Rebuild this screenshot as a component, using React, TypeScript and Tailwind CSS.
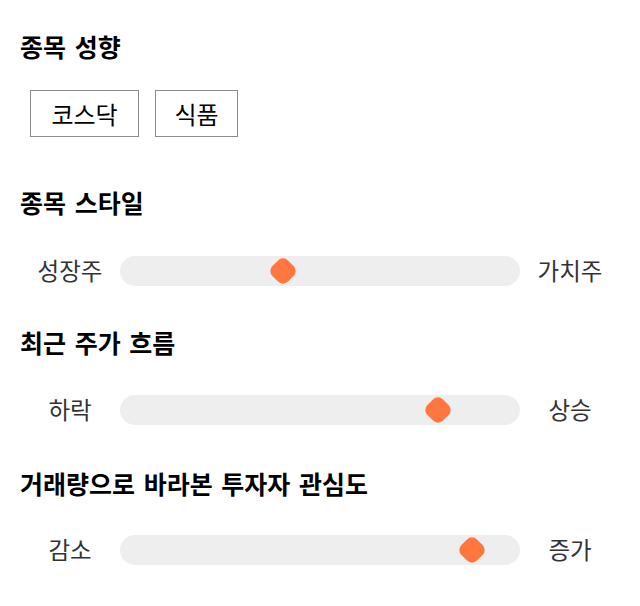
const font = { fontFamily: '"Noto Sans CJK KR", "Noto Sans", sans-serif' };

type SliderProps = {
  left: string;
  right: string;
  value: number;
};

function Slider({ left, right, value }: SliderProps) {
  return (
    <div className="flex items-center h-[30px]">
      <span className="w-[100px] shrink-0 text-center text-[23.5px] text-[#333]">{left}</span>
      <div className="relative w-[400px] h-[30px] rounded-full bg-[#eeeeee]">
        <div
          className="absolute top-[4px] w-[22px] h-[22px] rotate-45 rounded-[7px] bg-[#ff763f]"
          style={{ left: `${4 + value * 3.7}px` }}
        />
      </div>
      <span className="w-[100px] shrink-0 text-center text-[23.5px] text-[#333]">{right}</span>
    </div>
  );
}

function Heading({ children }: { children: string }) {
  return (
    <h2 className="h-[36px] leading-[36px] text-[25px] font-bold text-black [word-spacing:3px]">
      {children}
    </h2>
  );
}

export default function App() {
  return (
    <div className="w-[640px] h-[606px] bg-white px-5 pt-[28px]" style={font}>
      <Heading>종목 성향</Heading>
      <div className="flex gap-4 mt-[26px] ml-[10px]">
        <button className="w-[109px] h-[47px] border border-[#8c8c8c] text-[24px] text-black">코스닥</button>
        <button className="w-[83px] h-[47px] border border-[#8c8c8c] text-[24px] text-black">식품</button>
      </div>

      <div className="mt-[47px]">
        <Heading>종목 스타일</Heading>
      </div>
      <div className="mt-[36px]">
        <Slider left="성장주" right="가치주" value={40} />
      </div>

      <div className="mt-[38px]">
        <Heading>최근 주가 흐름</Heading>
      </div>
      <div className="mt-[35px]">
        <Slider left="하락" right="상승" value={82} />
      </div>

      <div className="mt-[40px]">
        <Heading>거래량으로 바라본 투자자 관심도</Heading>
      </div>
      <div className="mt-[34px]">
        <Slider left="감소" right="증가" value={91} />
      </div>
    </div>
  );
}
